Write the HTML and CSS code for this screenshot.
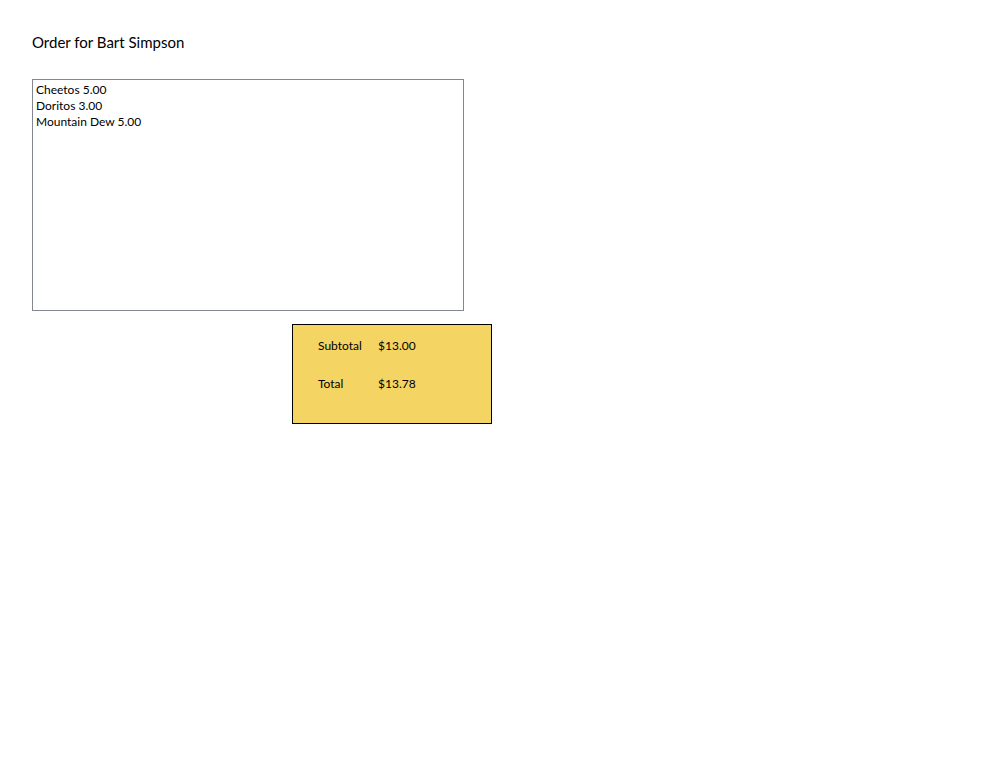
FILE: index.html
```html
<!DOCTYPE html>
<html>
<head>
<meta charset="utf-8">
<link rel="stylesheet" href="styles.css">
</head>
<body>
<div class="page">
  <h1 class="title">Order for Bart Simpson</h1>
  <ul class="listbox">
    <li>Cheetos 5.00</li>
    <li>Doritos 3.00</li>
    <li>Mountain Dew 5.00</li>
  </ul>
  <div class="totals">
    <div class="row"><span class="label">Subtotal</span><span class="value">$13.00</span></div>
    <div class="row"><span class="label">Total</span><span class="value">$13.78</span></div>
  </div>
</div>
</body>
</html>
```
FILE: styles.css
```css
html, body {
  margin: 0;
  padding: 0;
  background: #fff;
}
body {
  font-family: "Segoe UI", Lato, "Open Sans", sans-serif;
  color: #000;
}
.page {
  padding: 32px 0 0 32px;
}
.title {
  margin: 0;
  font-size: 15px;
  font-weight: 400;
  line-height: 20px;
  height: 47px;
}
.listbox {
  list-style: none;
  margin: 0;
  padding: 2px 3px;
  box-sizing: border-box;
  width: 432px;
  height: 232px;
  border: 1px solid #828790;
  font-size: 12px;
  line-height: 16px;
}
.totals {
  margin: 13px 0 0 260px;
  box-sizing: border-box;
  width: 200px;
  height: 100px;
  border: 1px solid #000;
  background: #f4d463;
  padding: 12px 0 0 25px;
  font-size: 12px;
  line-height: 18px;
  display: flex;
  flex-direction: column;
  gap: 20px;
}
.row {
  display: flex;
}
.label {
  width: 60px;
}
```
